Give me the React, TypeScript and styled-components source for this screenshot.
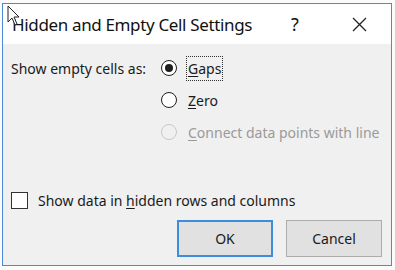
import styled, { createGlobalStyle } from "styled-components";

const Global = createGlobalStyle`
  html, body {
    margin: 0;
    padding: 0;
    background: #ffffff;
  }
  body {
    font-family: "Noto Sans", "Open Sans", sans-serif;
    color: #1a1a1a;
  }
`;

const Screen = styled.div`
  width: 395px;
  height: 270px;
  position: relative;
  overflow: hidden;
  padding: 3px 0 0 2px;
  box-sizing: border-box;
  background: #fbfbfb;
`;

const Window = styled.div`
  width: 390px;
  height: 263px;
  box-sizing: border-box;
  border: 1px solid #4a8ad6;
  display: flex;
  flex-direction: column;
  background: #f0f0f0;
`;

const TitleBar = styled.div`
  height: 40px;
  background: #ffffff;
  display: flex;
  align-items: center;
  padding-left: 9px;
  flex-shrink: 0;
`;

const Title = styled.div`
  font-size: 17px;
  flex: 1;
  color: #111;
  letter-spacing: -0.35px;
  white-space: nowrap;
`;

const TitleButton = styled.div<{ $w: number }>`
  width: ${(p) => p.$w}px;
  height: 40px;
  display: flex;
  align-items: center;
  justify-content: center;
  font-size: 18px;
  color: #111;
`;

const Body = styled.div`
  flex: 1;
  display: flex;
  flex-direction: column;
  padding: 8px 9px 8px 8px;
  font-size: 14px;
`;

const OptionsRow = styled.div`
  display: flex;
`;

const Label = styled.div`
  width: 150px;
  height: 32px;
  display: flex;
  align-items: center;
  white-space: nowrap;
`;

const RadioGroup = styled.div`
  display: flex;
  flex-direction: column;
`;

const RadioRow = styled.div<{ $disabled?: boolean }>`
  height: 32px;
  display: flex;
  align-items: center;
  white-space: nowrap;
  color: ${(p) => (p.$disabled ? "#9a9a9a" : "#1a1a1a")};
`;

const RadioCircle = styled.span<{ $checked?: boolean; $disabled?: boolean }>`
  width: 16px;
  height: 16px;
  box-sizing: border-box;
  border-radius: 50%;
  border: 1.5px solid ${(p) => (p.$disabled ? "#c8c8c8" : "#1e1e1e")};
  background: ${(p) => (p.$disabled ? "#f0f0f0" : "#ffffff")};
  display: flex;
  align-items: center;
  justify-content: center;
  margin-right: 9px;
  flex-shrink: 0;
  &::after {
    content: "";
    display: ${(p) => (p.$checked ? "block" : "none")};
    width: 8px;
    height: 8px;
    border-radius: 50%;
    background: #1e1e1e;
  }
`;

const RadioText = styled.span<{ $focus?: boolean }>`
  padding: 2px 1px;
  border: 1px dotted ${(p) => (p.$focus ? "#333" : "transparent")};
  line-height: 19px;
`;

const Key = styled.span`
  text-decoration: underline;
  text-underline-offset: 2px;
`;

const CheckRow = styled.div`
  display: flex;
  align-items: center;
  margin-top: 42px;
  height: 20px;
  white-space: nowrap;
`;

const CheckBox = styled.span`
  width: 17px;
  height: 17px;
  box-sizing: border-box;
  border: 1px solid #333;
  background: #fff;
  margin-right: 10px;
`;

const Buttons = styled.div`
  display: flex;
  justify-content: flex-end;
  gap: 13px;
  margin-top: 10px;
`;

const Button = styled.div<{ $default?: boolean }>`
  width: 96px;
  height: 37px;
  box-sizing: border-box;
  border: ${(p) => (p.$default ? "2px solid #3c8ddb" : "1px solid #adadad")};
  background: #e1e1e1;
  display: flex;
  align-items: center;
  justify-content: center;
  font-size: 14px;
`;

const Cursor = styled.svg`
  position: absolute;
  left: 7px;
  top: 5px;
`;

export default function App() {
  return (
    <Screen>
      <Global />
      <Window>
        <TitleBar>
          <Title>Hidden and Empty Cell Settings</Title>
          <TitleButton $w={64}>?</TitleButton>
          <TitleButton $w={64}>
            <svg width="15" height="15" viewBox="0 0 15 15">
              <path d="M1 1 L14 14 M14 1 L1 14" stroke="#222" strokeWidth="1.3" fill="none" />
            </svg>
          </TitleButton>
        </TitleBar>
        <Body>
          <OptionsRow>
            <Label>Show empty cells as:</Label>
            <RadioGroup>
              <RadioRow>
                <RadioCircle $checked />
                <RadioText $focus>
                  <Key>G</Key>aps
                </RadioText>
              </RadioRow>
              <RadioRow>
                <RadioCircle />
                <RadioText>
                  <Key>Z</Key>ero
                </RadioText>
              </RadioRow>
              <RadioRow $disabled>
                <RadioCircle $disabled />
                <RadioText>
                  <Key>C</Key>onnect data points with line
                </RadioText>
              </RadioRow>
            </RadioGroup>
          </OptionsRow>
          <CheckRow>
            <CheckBox />
            <span>
              Show data in <Key>h</Key>idden rows and columns
            </span>
          </CheckRow>
          <Buttons>
            <Button $default>OK</Button>
            <Button>Cancel</Button>
          </Buttons>
        </Body>
      </Window>
      <Cursor width="14" height="22" viewBox="0 0 14 22">
        <path d="M1 1 L1 17 L5 13 L8 20 L10 19 L7 12 L12 12 Z" fill="#fff" stroke="#222" strokeWidth="1" strokeLinejoin="round" />
      </Cursor>
    </Screen>
  );
}
